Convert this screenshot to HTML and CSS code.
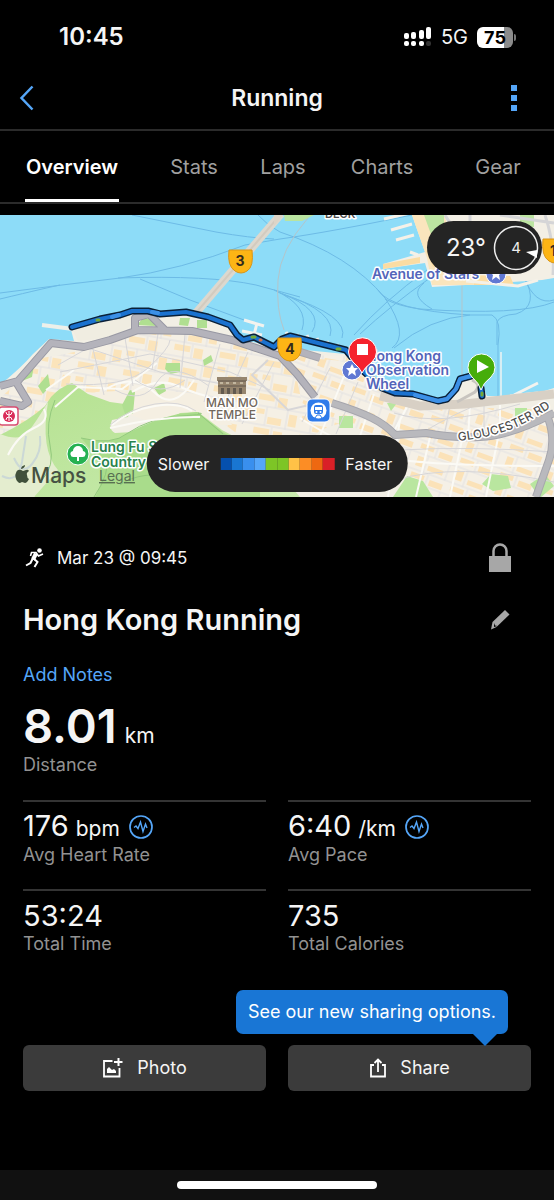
FILE: index.html
```html
<!DOCTYPE html>
<html lang="en">
<head>
<meta charset="utf-8">
<meta name="viewport" content="width=device-width, initial-scale=1">
<title>Hong Kong Running</title>
<link rel="stylesheet" href="styles.css">
</head>
<body>
<div class="screen">
  <div class="status">
    <span class="status-time">10:45</span>
    <div class="status-right">
      <svg width="28" height="20" viewBox="0 0 28 20" fill="#fff" aria-hidden="true">
        <rect y="6" width="5" height="6" rx="2"/><rect x="7" y="5" width="5" height="7" rx="2"/><rect x="15" y="3" width="5" height="9" rx="2"/><rect x="22" width="5" height="12" rx="2"/>
        <rect y="14" width="5" height="5" rx="2"/><rect x="7" y="14" width="5" height="5" rx="2"/><rect x="15" y="14" width="5" height="5" rx="2"/><rect x="22" y="14" width="5" height="5" rx="2" fill="#333"/>
      </svg>
      <span class="network">5G</span>
      <span class="battery"><span class="battery-body">75</span><i class="battery-tip"></i></span>
    </div>
  </div>

  <header class="nav">
    <button class="nav-button" aria-label="Back">
      <svg width="16" height="26" viewBox="0 0 16 26"><path d="M13.500 1.500 2.500 13l11 11.500" fill="none" stroke="#55a6f8" stroke-width="2.500"/></svg>
    </button>
    <h1 class="nav-title">Running</h1>
    <button class="nav-button nav-more" aria-label="More">
      <svg width="6" height="26" viewBox="0 0 6 26" fill="#55a6f8"><path d="M0 0h6v6H0zM0 10h6v6H0zM0 20h6v6H0z"/></svg>
    </button>
  </header>

  <nav class="tabs">
    <a class="tab tab-active" href="#overview">Overview</a>
    <a class="tab" href="#stats">Stats</a>
    <a class="tab" href="#laps">Laps</a>
    <a class="tab" href="#charts">Charts</a>
    <a class="tab" href="#gear">Gear</a>
  </nav>

  <section class="map" id="overview" aria-label="Route map">
    <svg class="map-art" viewBox="0 215 554 282" preserveAspectRatio="xMidYMid slice">
      <defs>
        <pattern id="blocksA" width="46" height="34" patternUnits="userSpaceOnUse" patternTransform="rotate(10)">
          <rect width="46" height="34" fill="#f5f0e5"/>
          <path d="M2 2h16v6H2zM22 3h9v10h-9zM2 17h8v5H2zM14 24h14v7H14zM35 18h8v12h-8z" fill="#fbe4bb"/>
          <path d="M0 14h46M20 0v14M33 14v20M0 33h46M12 14v19" fill="none" stroke="#e2e1e1" stroke-width="1"/>
        </pattern>
        <pattern id="blocksB" width="42" height="30" patternUnits="userSpaceOnUse" patternTransform="rotate(20)">
          <rect width="42" height="30" fill="#f5f0e6"/>
          <path d="M2 2h14v5H2zM22 4h14v6H22zM3 15h7v10H3zM16 21h16v5H16z" fill="#fbe2b8"/>
          <path d="M0 12h42M19 0v12M13 12v18M36 12v18M0 29h42" fill="none" stroke="#e3e2e2" stroke-width="1"/>
        </pattern>
        <linearGradient id="hill" x1="0" x2="1" y1="0" y2="1"><stop offset="0" stop-color="#b4e18f"/><stop offset="1" stop-color="#c9ebaf"/></linearGradient>
      </defs>
      <rect y="215" width="554" height="282" fill="#8ddcf8"/>

      <!-- ferry lines -->
      <g fill="none" stroke="#6dbbe6" stroke-width="1">
        <path d="M0 293Q60 285 120 278Q180 270 245 245L280 239Q330 232 412 215M0 299Q50 287 60 285M132 215 216 232Q250 238 274 239M118 278Q210 275 256 285L300 297M140 279 190 300 244 320M258 215Q268 226 280 232Q350 255 385 298Q410 335 392 348M274 290Q310 306 302 330M278 292Q326 310 312 332M280 293Q338 312 330 336M284 295Q350 316 342 338M354 335Q385 300 427 270M360 334Q390 306 430 278M385 299Q398 306 420 309 520 316 554 302M424 283Q408 295 432 309M394 348Q430 318 470 315H492Q502 320 498 345V396M497 345V322Q500 315 516 314Q540 306 524 277Q535 306 554 300M470 315Q390 310 378 290"/>
      </g>
      <path d="M308 218Q280 250 278 280 276 310 284 330M462 284v116" fill="none" stroke="#b4c5ca" stroke-width="1"/>
      <path d="m281 214-86 100" stroke="#ddd8ce" stroke-width="8"/>
      <path d="m281 214-86 100" stroke="#d3cbbf" stroke-width="2"/>

      <!-- north shore -->
      <path d="M284 215h30l-12 6h-17z" fill="#b9e4a0"/><path d="M274 215h9l-9 11z" fill="#ddd4c6"/>
      <path d="M412 215 425 252 383 264v5l42-6 7 24 50-3 60-4 12-2v-63z" fill="#f3efe5"/>
      <path d="M412 215 427 258 432 285h58l-4-10h-20l-22-60z" fill="#fae5bd"/>
      <path d="M383 264v5l37-6v-6zM426 251l7 16 6-4-6-18zM474 276h36l4 9h-40z" fill="#fbdca3"/>
      <path d="M424 215h20v26l-12-4zM520 215h14v12h-14z" fill="#bce4a1"/>
      <path d="m384 219 26-6M391 230l21-6M396 240l18-5M418 255l-8-3M466 281l52 5 20-6" fill="none" stroke="#f5f1e8" stroke-width="3"/>
      <path d="M445 215q10 18 28 22M470 215v12M545 215q10 30 8 60M500 215l54 8" fill="none" stroke="#d5d5d7" stroke-width="3"/>

      <!-- island -->
      <path d="M0 385Q22 367 33 354L49 339 74 341 71 330Q100 321 130 311L190 312 231 327 248 341 275 347 345 354 362 372 382 391 438 402 456 390 463 378 477 375 487 396 528 396 554 388V497H0z" fill="#f2efe5"/>
      <path d="M42 358 78 352 112 343 140 333 205 336 272 354 345 356 392 394 368 414 320 430 300 452 235 432 188 398 112 392 42 394z" fill="url(#blocksA)"/>
      <path d="M0 398 45 358 84 350 56 392 24 450 0 434z" fill="url(#blocksA)"/>
      <path d="M292 357 345 361 392 405 554 410V497H408L360 430 302 403z" fill="url(#blocksB)"/>
      <path d="M95 392Q180 388 215 398L232 425 160 425 110 408z" fill="#f5efe2"/>

      <!-- parks and hills -->
      <path d="M51 397Q60 387 72 383L88 394 110 402 132 405 128 417 112 420Q108 430 115 433L150 431 180 413 198 412 222 430 260 450 300 497H35Q8 478 0 468V435Q30 420 45 406z" fill="url(#hill)"/>
      <path d="M81 438Q112 446 128 433Q152 420 178 414L197 412 224 433 260 450V497H95Q112 470 81 438z" fill="#a9dc8b"/>
      <path d="M0 434Q20 442 28 432T48 402Q40 450 58 470L34 497H0z" fill="#e4edcf"/>
      <path d="M166 363h14v9l-10 2-5-5zM203 360l8-5 2 6-9 5zM20 375q10-14 14-10l-2 12-10 4zM154 388l10-5 2 8-7 4zM130 390l5 2-2 22h-8l-3-9zM38 386l10-12 2 12-7 8zM180 318h10l-2 8-9-1zM137 325l6-7q12 0 12 8zM197 320h10v8h-10z" fill="#b0df91"/>
      <path d="M339 416h14v12h-14zM387 403h10l-6 8zM515 408h12v14h-12zM407 476l16 5 10 16h-40zM482 484l9-10 17 2 3 12-18 3zM530 484l15-10 9 12-14 12z" fill="#b9e69f"/>
      <g fill="none" stroke="#93c97d" stroke-width="1"><path d="M81 438Q112 446 128 433Q150 418 180 416T198 413L223 434M94 497q17-25 12-40M55 400Q45 424 50 445T42 480M120 485q20-15 60-8"/></g>

      <!-- minor streets -->
      <g fill="none" stroke="#fbfaf5" stroke-width="2">
        <path d="M112 425Q130 410 155 406T192 411M110 428q50-12 90-11M104 390q30-18 50 2t40-12M132 392q25-15 46-6t30 10M46 390 74 370M55 407l23-20 44 2 35-26M8 455q10-20 26-27T44 409"/>
        <path d="M300 418Q350 450 390 458T554 466M400 420 388 497M430 437 416 497M462 440 450 497M498 438 486 497M350 438l-22 32M344 376l-24 60M374 394l-20 60M408 405l-16 30M470 405l-2 34M500 405v30"/>
      </g>
      <path d="M14 458q8 18 18 6t8-28M2 476q16 8 20-14l4-26" fill="none" stroke="#cbd8d6" stroke-width="2"/>
      <g fill="none" stroke="#d7d6d8" stroke-width="1">
        <path d="M60 372 150 354 230 372 270 390M58 365 88 348 160 372 232 386M92 345l12 50M125 338l8 48M158 334l-6 36M185 334l-5 54M220 344l-16 58M248 352l-26 58M274 362l-32 62M66 384q60 4 82-16t22-28M115 390q28 15 42-8t52 4M110 425Q130 408 155 404T196 411M135 380q26 18 50 0"/>
        <path d="M394 413Q440 428 520 404M418 435Q460 410 490 400M400 450Q470 446 554 452M396 480q60-18 158 2M330 368l-28 54M358 382l-22 52M450 405l-6 32M484 402v37"/>
      </g>
      <path d="M268 360 252 375 288 410 322 402" fill="none" stroke="#d7d6d8" stroke-width="2"/>

      <!-- coastal land and piers -->
      <path d="M72 329Q100 319 130 311L132 325 112 337 78 341z" fill="#f0ede1"/>
      <path d="M42 325 73 329" stroke="#edf0ea" stroke-width="4"/>
      <path d="M244 320l20 6M242 331l20 4M257 323l-3 12M286 332l3 5M297 334l2 6M307 335l2 6M317 338l2 6M327 341l2 6M337 344l2 6M514 395l24-12M510 396l28-3" fill="none" stroke="#f3f3ef" stroke-width="3"/>
      <path d="M501 352v45" stroke="#d7eef4" stroke-width="2"/>
      <path d="M380 396 420 406 465 404 554 394" fill="none" stroke="#d8d0c5" stroke-width="9"/>
      <path d="M472 380q10 4 3 12l-18 10" fill="none" stroke="#c8c4bf" stroke-width="3"/>

      <!-- main roads -->
      <g fill="none" stroke-linejoin="round">
        <path d="M0 386 18 381 51 343 84 347 110 340 138 330 192 331 232 340 280 356 297 374 315 397M16 382l12 20-6 4L0 401M135 330v-12l14-4 16 16" stroke="#9898a3" stroke-width="8"/>
        <path d="M332 403Q358 411 372 418T395 435L426 433Q450 438 480 437T554 413M548 418Q556 440 549 460T536 497M278 345l42 13" stroke="#a6a6ad" stroke-width="8"/>
        <path d="M0 386 18 381 51 343 84 347 110 340 138 330 192 331 232 340 280 356 297 374 315 397M16 382l12 20-6 4L0 401M135 330v-12l14-4 16 16M278 345l42 13" stroke="#b4b3bb" stroke-width="6"/>
        <path d="M332 403Q358 411 372 418T395 435L426 433Q450 438 480 437T554 413M548 418Q556 440 549 460T536 497" stroke="#b9b9bd" stroke-width="6"/>
      </g>

      <!-- recorded run -->
      <g fill="none" stroke-linecap="round" stroke-linejoin="round">
        <path d="M72 327 100 319 120 315 132 311 148 311 160 314 186 312 208 317 230 325 237 335 243 340 254 337 266 343 274 347 282 339 290 336 310 341 330 346 346 350 362 370 382 388 395 393 413 394 438 401 447 399 456 389 460 379 471 376 M481 388 482 396" stroke="#0a2038" stroke-width="7"/>
        <path d="M72 327 100 319 120 315 132 311 148 311 160 314 186 312 208 317 230 325 237 335 243 340 254 337 266 343 274 347 282 339 290 336 310 341 330 346 346 350 362 370 382 388 395 393 413 394 438 401 447 399 456 389 460 379 471 376 M481 388 482 396" stroke="#1b72cf" stroke-width="4"/>
        <path d="m112 317 7-2M152 312l6 1M415 395l23 6 9-2 9-10 4-10 11-3" stroke="#3d90e6" stroke-width="4"/>
        <path d="M97 320h2M252 337h3M337 349h3M482 393v2" stroke="#75a936" stroke-width="3"/><path d="M260 340h1" stroke="#d17750" stroke-width="3"/>
      </g>

      <!-- labels -->
      <g class="map-label">
        <text x="325" y="218" class="label-grey">DECK</text>
        <text x="372" y="279" class="label-blue label-avenue">Avenue of Stars</text>
        <text x="366" y="361" class="label-blue">Hong Kong</text>
        <text x="366" y="375" class="label-blue">Observation</text>
        <text x="366" y="389" class="label-blue">Wheel</text>
        <text x="232" y="407" class="label-temple">MAN MO</text>
        <text x="232" y="419" class="label-temple">TEMPLE</text>
        <text x="91" y="452" class="label-green">Lung Fu S</text>
        <text x="91" y="467" class="label-green">Country</text>
        <path id="road-name" d="M458 441Q490 438 514 428T566 396" fill="none"/>
        <text class="label-road"><textPath href="#road-name">GLOUCESTER RD</textPath></text>
      </g>

      <circle cx="496" cy="274" r="10" fill="#6078d3" stroke="#fff" stroke-width="1"/>
      <path d="m496 268 2 4h4l-3 3 1 5-4-3-4 3 1-5-3-3h4z" fill="#fff"/>
      <circle cx="352" cy="370" r="10" fill="#6078d3" stroke="#fff" stroke-width="1"/>
      <path d="m352 364 2 4h4l-3 3 1 5-4-3-4 3 1-5-3-3h4z" fill="#fff"/>

      <circle cx="78" cy="454" r="11" fill="#25b151" stroke="#fff" stroke-width="1"/>
      <path d="M77 461v-4h-3a3 3 0 0 1-1-6 5 5 0 0 1 10 0 3 3 0 0 1-1 6h-3v4z" fill="#fff"/>

      <g><path d="M217 377h30v4h-1v13h-28v-13h-1z" fill="#96856e"/><path d="M218 381h28M218 386h28" stroke="#60574c"/><path d="M221 388h3v6h-3zm6 0h3v6h-3zm6 0h3v6h-3zm6 0h3v6h-3z" fill="#62594e"/><path d="M220 382h3v2h-3zm6 0h3v2h-3zm7 0h3v2h-3zm7 0h3v2h-3z" fill="#c2b69f"/></g>

      <rect x="307" y="399" width="23" height="23" rx="5" fill="#2f7bea" stroke="#fff"/>
      <circle cx="318.500" cy="410.500" r="8" fill="#fff"/><rect x="314" y="405" width="9" height="9" rx="2" fill="#2f7bea"/><path d="M315 407h7v3h-7z" fill="#fff"/><path d="M315 418l2-3h3l2 3" stroke="#2f7bea" stroke-width="1" fill="none"/><circle cx="316.500" cy="412" r="1" fill="#fff"/><circle cx="320.500" cy="412" r="1" fill="#fff"/>

      <rect x="-1" y="407" width="19" height="18" rx="3" fill="#fff" stroke="#d84e72" stroke-width="1.500"/>
      <circle cx="9" cy="416" r="6" fill="#d92c59"/><path d="M9 411v10M6 412q0 3 3 3t3-3M6 420q0-3 3-3t3 3" fill="none" stroke="#fff"/>

      <g stroke="#d9961a" fill="#fdb515">
        <path d="M229 250h23q2 17-5 21-6 4-12 0-8-5-6-21z"/>
        <path d="M278 338h23q2 17-5 21-6 4-12 0-8-5-6-21z"/>
        <path d="M543 239h24q2 17-5 22-7 4-13 0-8-5-6-22z"/>
      </g>
      <g class="shield-text"><text x="240" y="266">3</text><text x="290" y="354">4</text><text x="553" y="256">1</text></g>

      <path d="M362 373q-2-5-9-11a14 14 0 1 1 19 0q-8 6-10 11z" fill="#f5222d" stroke="#fff"/>
      <rect x="357" y="344" width="11" height="11" fill="#fff"/>
      <path d="M481 390q-2-7-9-13a13.500 13.500 0 1 1 19 0q-8 6-10 13z" fill="#46ad0a" stroke="#fff"/>
      <path d="m477 360 12 7-12 6z" fill="#fff"/>

      <path d="M26 470q2-1 3 1-3 2-2 4 0 3 2 4-2 4-4 4l-3-1-2 1c-3 0-6-7-4-10 1-4 4-4 7-2zM21 469q0-3 4-4 0 3-4 4z" fill="#40503b"/>
      <text x="31" y="483" class="maps-word">Maps</text>
      <text x="99" y="481" class="legal">Legal</text>
    </svg>

    <div class="weather">
      <span class="temperature">23°</span>
      <svg width="46" height="46" viewBox="0 0 46 46" role="img" aria-label="Wind 4"><circle cx="23" cy="23" r="21.500" fill="none" stroke="#eee" stroke-width="1.500"/><path d="M44 25v8l-11-6z" fill="#fff"/><text x="23" y="28" class="wind">4</text></svg>
    </div>

    <div class="legend">
      <span>Slower</span>
      <span class="legend-bar"><i class="c1"></i><i class="c2"></i><i class="c3"></i><i class="c4"></i><i class="c5"></i><i class="c5"></i><i class="c6"></i><i class="c7"></i><i class="c8"></i><i class="c9"></i></span>
      <span>Faster</span>
    </div>
  </section>

  <main class="activity">
    <div class="row date-row">
      <div class="date">
        <svg width="24" height="22" viewBox="0 0 24 22" aria-hidden="true"><circle cx="16.500" cy="3.500" r="2.300" fill="#fff"/><path d="M7.500 9 8.500 5.500 13 5.500 15.500 9 20 7" fill="none" stroke="#fff" stroke-width="1.600"/><path d="m13 6.500-3 6" stroke="#fff" stroke-width="4"/><path d="m10.500 11.500 4 3.500-3 5M9.500 12 7.500 16 3 18.500" fill="none" stroke="#fff" stroke-width="2"/></svg>
        <span>Mar 23 @ 09:45</span>
      </div>
      <svg width="24" height="30" viewBox="0 0 24 30" role="img" aria-label="Private"><path d="M5.500 14V8a6.500 6.500 0 0 1 13 0v6" fill="none" stroke="#a7a7a7" stroke-width="2.500"/><path d="M1 13h22v16H1z" fill="#a7a7a7"/></svg>
    </div>
    <div class="row title-row">
      <h2 class="title">Hong Kong Running</h2>
      <button class="edit" aria-label="Edit name"><svg width="20" height="20" viewBox="0 0 20 20"><path d="m15 0 4.500 4.500L6.500 17 1 19.500 2.500 12z" fill="#a7a7a7"/><path d="m4 13 1 2.500 2.500.5L4 17z" fill="#000"/></svg></button>
    </div>
    <a class="notes" href="#notes">Add Notes</a>
    <div class="distance"><span class="distance-value">8.01</span><span class="unit">km</span></div>
    <div class="label">Distance</div>

    <div class="stats" id="stats">
      <div class="stat">
        <div class="stat-line"><span class="reading"><span class="value">176</span><span class="unit">bpm</span></span>
          <svg width="24" height="24" viewBox="0 0 24 24" fill="none" stroke="#55a6f8" aria-hidden="true"><circle cx="12" cy="12" r="11" stroke-width="1.700"/><path d="m5 12.500 2-1.500 2 2.500L11.500 7 14 16.500 16.500 9l1.500 4" stroke-width="1.400"/></svg></div>
        <div class="label">Avg Heart Rate</div>
      </div>
      <div class="stat">
        <div class="stat-line"><span class="reading"><span class="value">6:40</span><span class="unit">/km</span></span>
          <svg width="24" height="24" viewBox="0 0 24 24" fill="none" stroke="#55a6f8" aria-hidden="true"><circle cx="12" cy="12" r="11" stroke-width="1.700"/><path d="m5 12.500 2-1.500 2 2.500L11.500 7 14 16.500 16.500 9l1.500 4" stroke-width="1.400"/></svg></div>
        <div class="label">Avg Pace</div>
      </div>
      <div class="stat">
        <div class="stat-line"><span class="value">53:24</span></div>
        <div class="label">Total Time</div>
      </div>
      <div class="stat">
        <div class="stat-line"><span class="value">735</span></div>
        <div class="label">Total Calories</div>
      </div>
    </div>

    <div class="actions">
      <button class="action">
        <svg width="22" height="20" viewBox="0 0 22 20" aria-hidden="true"><path d="M10.500 3H2v15.500h15.500V10" fill="none" stroke="#fff" stroke-width="1.800"/><path d="M16.500 0v8M12 4h8.500" stroke="#fff" stroke-width="2"/><path d="M5 15v-4l2-2 3 3 2-1 2 2v2z" fill="#fff"/></svg>
        Photo
      </button>
      <div class="share">
        <div class="tooltip" role="tooltip">See our new sharing options.</div>
        <button class="action">
          <svg width="18" height="20" viewBox="0 0 18 20" fill="none" stroke="#fff" stroke-width="1.800" aria-hidden="true"><path d="M5 7H2v11.500h14V7h-3M9 14V2M5.500 5 9 1.500 12.500 5"/></svg>
          Share
        </button>
      </div>
    </div>
  </main>

  <footer class="bottom">
    <div class="home-indicator"></div>
  </footer>
</div>
</body>
</html>
```
FILE: styles.css
```css
* { box-sizing: border-box; }
body { margin: 0; background: #000; color: #f5f5f5; font-family: Inter, "Liberation Sans", sans-serif; font-size: 18px; line-height: 22px; }
button { border: 0; padding: 0; background: none; color: inherit; font: inherit; cursor: pointer; }
a { text-decoration: none; }
svg { display: block; }
.screen { min-height: 100vh; display: flex; flex-direction: column; overflow: hidden; }

.status { display: flex; justify-content: space-between; align-items: center; height: 66px; padding: 8px 38px 0 59px; }
.status-time { font-size: 24px; font-weight: 600; }
.status-right { display: flex; align-items: center; gap: 9px; }
.network { font-size: 20px; }
.battery { display: flex; align-items: center; gap: 1px; }
.battery-body { width: 36px; height: 21px; border-radius: 6px; background: linear-gradient(90deg, #fff 75%, #8b8b8b 75%); color: #000; font-size: 18px; font-weight: 700; line-height: 21px; text-align: center; }
.battery-tip { width: 2px; height: 7px; border-radius: 0 2px 2px 0; background: #777; }

.nav { display: grid; grid-template-columns: 1fr auto 1fr; align-items: center; height: 65px; padding: 0 37px 0 19px; border-bottom: 2px solid #2b2b2b; }
.nav-title { margin: 0 -18px 0 0; font-size: 23px; line-height: 32px; font-weight: 600; }
.nav-button { justify-self: start; }
.nav-more { justify-self: end; }

.tabs { display: grid; grid-template-columns: 144fr 100fr 78fr 120fr 112fr; height: 73px; border-bottom: 2px solid #2b2b2b; }
.tab { justify-self: center; padding: 24px 0 0; color: #a0a0a0; font-size: 20px; line-height: 24px; }
.tab-active { padding-left: 1px; padding-right: 1px; color: #fff; font-weight: 600; border-bottom: 3px solid #fff; }

.map { position: relative; margin-top: 11px; height: 282px; }
.map-art { width: 100%; height: 100%; }
.map-label text { paint-order: stroke; stroke: #fff; stroke-width: 3px; stroke-linejoin: round; font-weight: 600; }
.map-label .label-blue { fill: #5365ba; font-size: 14px; }
.map-label .label-avenue { font-size: 14px; }
.map-label .label-green { fill: #28834d; font-size: 14px; }
.map-label .label-grey { fill: #4e4e4e; font-size: 11px; }
.map-label .label-temple { fill: #71675c; font-size: 12px; text-anchor: middle; font-weight: 500; }
.map-label .label-road { fill: #505050; font-size: 12px; font-weight: 500; }
.shield-text { fill: #342b1c; font-size: 14px; font-weight: 700; text-anchor: middle; }
.maps-word { fill: #465243; font-size: 21px; font-weight: 500; }
.legal { fill: #587052; font-size: 14px; text-decoration: underline; }
.weather { position: absolute; top: 6px; right: 12px; display: flex; align-items: center; gap: 7px; padding: 4px 3px 3px 19px; border-radius: 27px; background: #242424; }
.temperature { font-size: 24px; }
.wind { fill: #eee; font-size: 15px; text-anchor: middle; }
.legend { position: absolute; bottom: 5px; left: 50%; transform: translateX(-50%); display: flex; align-items: center; gap: 11px; height: 57px; padding: 0 15px 0 11px; border-radius: 29px; background: #242424; font-size: 16px; }
.legend-bar { display: flex; width: 114px; height: 12px; }
.legend-bar i { flex: 1; }
.c1 { background: #0550ae; }
.c2 { background: #1976d2; }
.c3 { background: #398fee; }
.c4 { background: #55a6fa; }
.c5 { background: #7dc526; }
.c6 { background: #ffc247; }
.c7 { background: #fc8d25; }
.c8 { background: #ee6811; }
.c9 { background: #d92027; }

.activity { flex: 1; padding: 44px 23px 0; }
.row { display: flex; justify-content: space-between; align-items: center; padding-right: 19px; }
.date-row { height: 34px; }
.date { display: flex; align-items: center; gap: 10px; font-size: 17px; }
.title-row { margin-top: 25px; height: 40px; padding-right: 21px; }
.title { margin: 0; font-size: 29px; line-height: 40px; font-weight: 600; }
.notes { display: block; margin-top: 24px; color: #55a6f8; line-height: 22px; }
.distance { display: flex; align-items: baseline; gap: 8px; margin-top: 22px; line-height: 36px; }
.distance-value { font-size: 47px; font-weight: 600; }
.unit { font-size: 21px; }
.label { color: #929292; line-height: 22px; }
.stats { display: grid; grid-template-columns: 1fr 1fr; column-gap: 22px; margin-top: 24px; }
.stat { height: 89px; padding-top: 8px; border-top: 2px solid #343434; }
.stat-line { display: flex; align-items: center; gap: 9px; height: 34px; }
.reading { display: flex; align-items: baseline; gap: 7px; }
.value { font-size: 29px; }
.actions { display: grid; grid-template-columns: 1fr 1fr; gap: 22px; margin-top: 67px; }
.action { display: flex; align-items: center; justify-content: center; gap: 13px; width: 100%; height: 46px; border-radius: 6px; background: #3b3b3b; }
.share { position: relative; }
.tooltip { position: absolute; right: 23px; bottom: 57px; padding: 11px 12px; border-radius: 7px; background: #1976d5; color: #fff; white-space: nowrap; }
.tooltip::after { content: ""; position: absolute; top: 100%; right: 11px; border: 12px solid transparent; border-top-color: #1976d5; border-bottom: 0; }

.bottom { display: flex; justify-content: center; height: 30px; padding-top: 11px; background: #111; }
.home-indicator { width: 36%; height: 8px; border-radius: 4px; background: #fff; }
```
